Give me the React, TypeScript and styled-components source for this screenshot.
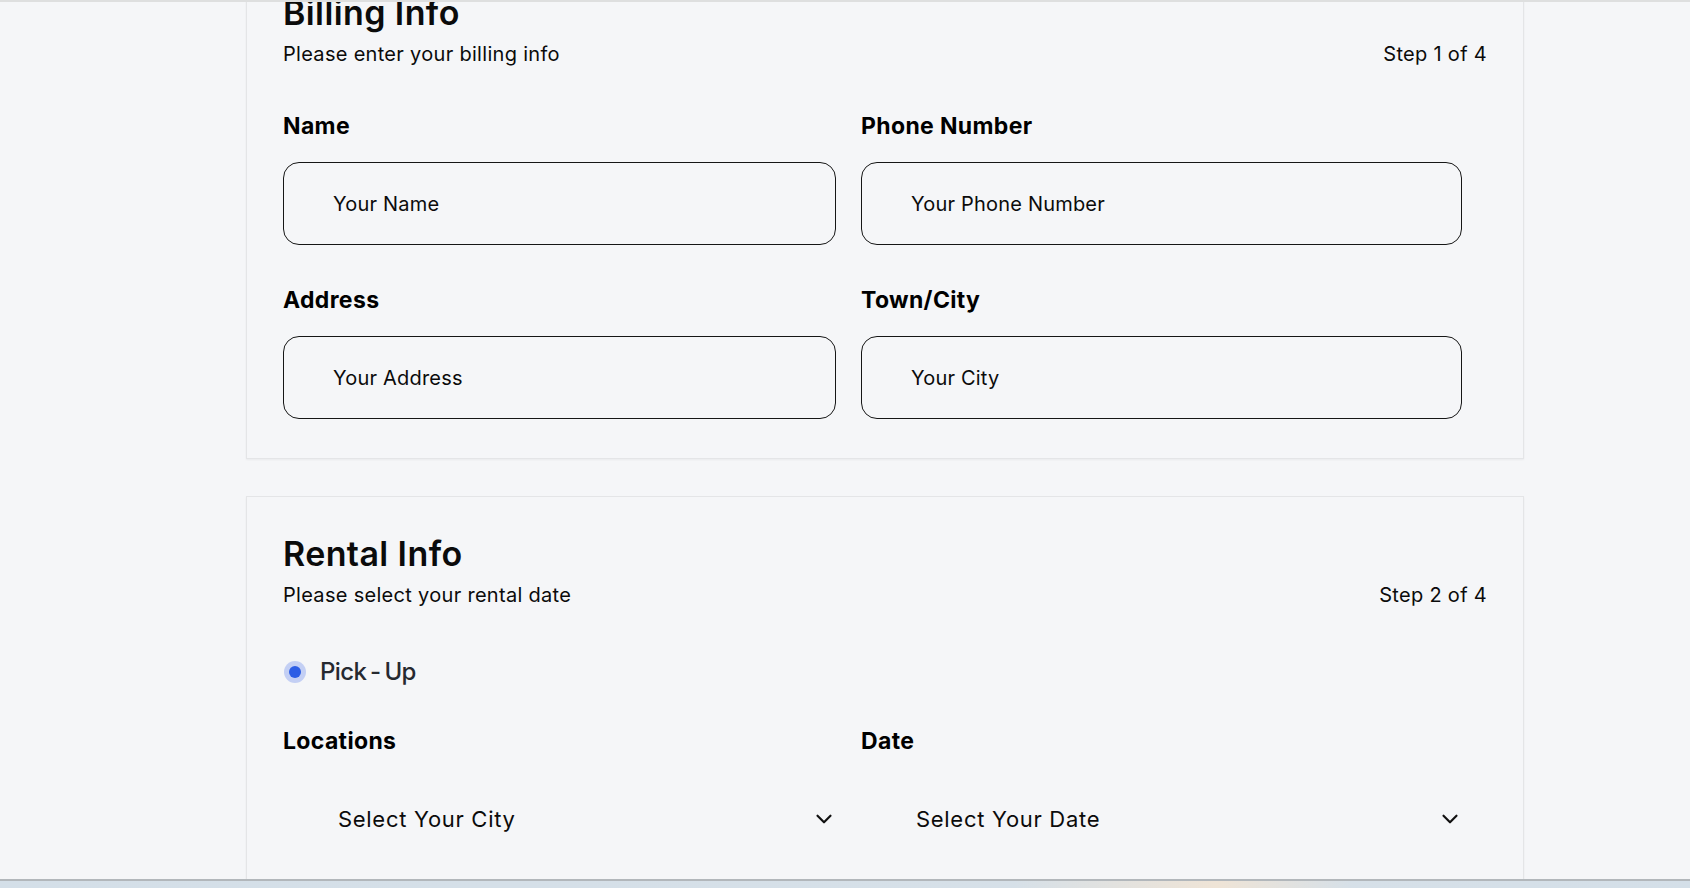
import React from "react";
import styled, { createGlobalStyle } from "styled-components";
import { ChevronDown } from "lucide-react";

const GlobalStyle = createGlobalStyle`
  html, body {
    margin: 0;
    padding: 0;
    background: #f5f6f8;
    font-family: Inter, "Noto Sans", "Liberation Sans", sans-serif;
    color: #0b0b0b;
    overflow: hidden;
  }
  * {
    box-sizing: border-box;
  }
`;

const App = () => {
  return (
    <>
      <GlobalStyle />
      <TopEdge />
      <Page>
        <Card>
          <Title>Billing Info</Title>
          <SubRow>
            <Subtitle>Please enter your billing info</Subtitle>
            <Step>Step 1 of 4</Step>
          </SubRow>
          <FieldGrid $top={47}>
            <Field>
              <Label>Name</Label>
              <Input type="text" placeholder="Your Name" />
            </Field>
            <Field>
              <Label>Phone Number</Label>
              <Input type="text" placeholder="Your Phone Number" />
            </Field>
            <Field>
              <Label>Address</Label>
              <Input type="text" placeholder="Your Address" />
            </Field>
            <Field>
              <Label>Town/City</Label>
              <Input type="text" placeholder="Your City" />
            </Field>
          </FieldGrid>
        </Card>

        <Card>
          <Title>Rental Info</Title>
          <SubRow>
            <Subtitle>Please select your rental date</Subtitle>
            <Step>Step 2 of 4</Step>
          </SubRow>
          <RadioRow>
            <Radio type="radio" name="mode" defaultChecked />
            <RadioText>Pick - Up</RadioText>
          </RadioRow>
          <FieldGrid $top={41}>
            <Field>
              <Label>Locations</Label>
              <SelectWrap>
                <Select defaultValue="">
                  <option value="">Select Your City</option>
                </Select>
                <Chevron size={26} strokeWidth={2} />
              </SelectWrap>
            </Field>
            <Field>
              <Label>Date</Label>
              <SelectWrap>
                <Select defaultValue="">
                  <option value="">Select Your Date</option>
                </Select>
                <Chevron size={26} strokeWidth={2} />
              </SelectWrap>
            </Field>
          </FieldGrid>
        </Card>
      </Page>
      <Taskbar />
    </>
  );
};

export default App;

const TopEdge = styled.div`
  position: fixed;
  top: 0;
  left: 0;
  right: 0;
  height: 2px;
  background: #dedfdf;
  z-index: 5;
`;

const Taskbar = styled.div`
  position: fixed;
  left: 0;
  right: 0;
  bottom: 0;
  height: 9px;
  border-top: 2px solid #b2b7bb;
  background: linear-gradient(90deg, #d4dfe8 0%, #d6e0e8 60%, #efe4d6 72%, #d6e0e8 80%, #d4dfe8 100%);
  z-index: 5;
`;

const Page = styled.div`
  display: flex;
  flex-direction: column;
  gap: 37px;
  width: 1524px;
  padding-left: 246px;
  margin-top: -45px;
`;

const Card = styled.section`
  background: #f5f6f8;
  border: 1px solid #e4e5e7;
  box-shadow: 0 1px 2px rgba(0, 0, 0, 0.05);
  padding: 37px 36px 39px;
`;

const Title = styled.h2`
  margin: 0;
  font-size: 34px;
  line-height: 40px;
  font-weight: 600;
  letter-spacing: 0.4px;
`;

const SubRow = styled.div`
  display: flex;
  justify-content: space-between;
  align-items: baseline;
  margin-top: 9px;
`;

const Subtitle = styled.p`
  margin: 0;
  font-size: 20px;
  line-height: 24px;
  letter-spacing: 0.3px;
`;

const Step = styled(Subtitle)``;

const FieldGrid = styled.div<{ $top: number }>`
  display: grid;
  grid-template-columns: 553px 601px;
  column-gap: 25px;
  row-gap: 42px;
  margin-top: ${(p) => p.$top}px;
`;

const Field = styled.div`
  display: flex;
  flex-direction: column;
  gap: 23px;
`;

const Label = styled.label`
  font-size: 23px;
  line-height: 26px;
  font-weight: 700;
  letter-spacing: 0.35px;
  color: #000;
`;

const Input = styled.input`
  height: 83px;
  width: 100%;
  border: 1px solid #161616;
  border-radius: 16px;
  background: transparent;
  padding: 0 0 0 49px;
  font-family: inherit;
  font-size: 20px;
  letter-spacing: 0.2px;
  color: #0b0b0b;
  outline: none;

  &::placeholder {
    color: #0b0b0b;
  }
`;

const RadioRow = styled.div`
  display: flex;
  align-items: center;
  gap: 13px;
  height: 30px;
  margin-top: 50px;
`;

const Radio = styled.input`
  appearance: none;
  margin: 0 0 0 6px;
  width: 12px;
  height: 12px;
  border-radius: 50%;
  background: #2c5de5;
  box-shadow: 0 0 0 5px #c3cff4;
  filter: blur(0.3px);
`;

const RadioText = styled.span`
  margin-left: 6px;
  font-size: 24px;
  line-height: 30px;
  font-weight: 500;
  color: #262930;
  letter-spacing: -0.6px;
  word-spacing: -2px;
`;

const SelectWrap = styled.div`
  position: relative;
  height: 83px;
`;

const Select = styled.select`
  appearance: none;
  width: 100%;
  height: 100%;
  border: none;
  background: transparent;
  padding: 0 0 0 55px;
  font-family: inherit;
  font-size: 22px;
  letter-spacing: 0.7px;
  color: #0b0b0b;
  outline: none;
`;

const Chevron = styled(ChevronDown)`
  position: absolute;
  right: -1px;
  top: 50%;
  transform: translateY(-50%);
  color: #111;
  pointer-events: none;
`;
